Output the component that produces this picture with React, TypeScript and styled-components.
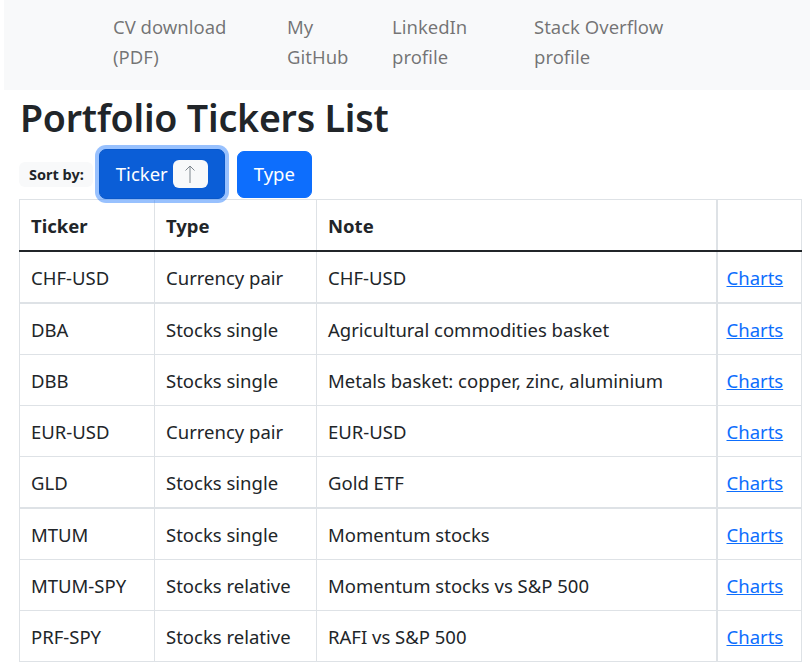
import React from "react";
import styled, { createGlobalStyle } from "styled-components";

const GlobalStyle = createGlobalStyle`
  html, body {
    margin: 0;
    padding: 0;
    background: #ffffff;
  }
  body {
    font-family: "Noto Sans", "Open Sans", sans-serif;
    font-size: 18.5px;
    line-height: 30px;
    color: #212529;
  }
`;

const NavBar = styled.nav`
  margin-left: 4px;
  height: 90px;
  box-sizing: border-box;
  padding: 12px 0 0 109px;
  background: #f8f9fa;
  display: flex;
  align-items: flex-start;
`;

const NavItem = styled.a<{ $w: number; $gap: number }>`
  display: block;
  width: ${(p) => p.$w}px;
  margin-right: ${(p) => p.$gap}px;
  flex: none;
  color: rgba(0, 0, 0, 0.55);
  text-decoration: none;
  line-height: 30px;
`;

const Main = styled.main`
  padding: 0 9px 0 19px;
`;

const Title = styled.h1`
  margin: 4px 0 7px 1px;
  font-size: 37.5px;
  line-height: 48px;
  font-weight: 600;
  letter-spacing: -0.2px;
`;

const SortRow = styled.div`
  display: flex;
  align-items: center;
  height: 50px;
`;

const SortBadge = styled.span`
  display: inline-flex;
  align-items: center;
  height: 25px;
  padding: 0 9px 0 10px;
  border-radius: 6px;
  background: #f8f9fa;
  color: #212529;
  font-size: 14.5px;
  font-weight: 700;
  line-height: 1;
  margin-right: 6px;
`;

const SortButton = styled.button<{ $active?: boolean }>`
  position: relative;
  z-index: 1;
  display: inline-flex;
  align-items: center;
  gap: 5px;
  height: ${(p) => (p.$active ? 50 : 47)}px;
  padding: 0 16px;
  margin-right: 12px;
  border: 1px solid ${(p) => (p.$active ? "#0a58ca" : "#0d6efd")};
  border-radius: 7px;
  background: ${(p) => (p.$active ? "#0b5ed7" : "#0d6efd")};
  color: #ffffff;
  font-family: inherit;
  font-size: 18.5px;
  line-height: 30px;
  box-shadow: ${(p) => (p.$active ? "0 0 0 4px rgba(49, 132, 253, 0.5)" : "none")};
  cursor: pointer;
`;

const ArrowBadge = styled.span`
  display: inline-flex;
  align-items: center;
  justify-content: center;
  width: 35px;
  height: 28px;
  border-radius: 6px;
  background: #f8f9fa;
`;

const Table = styled.table`
  width: 782px;
  border-collapse: collapse;
  table-layout: fixed;
  border: 1px solid #dee2e6;
`;

const HeadCell = styled.th<{ $w: number; $thick?: boolean }>`
  box-sizing: border-box;
  width: ${(p) => p.$w}px;
  text-align: left;
  font-weight: 700;
  padding: 11px 11px 9px;
  line-height: 30px;
  border: 1px solid #dee2e6;
  border-left-width: ${(p) => (p.$thick ? 2 : 1)}px;
  border-bottom: 2px solid #212529;
`;

const Cell = styled.td<{ $thick?: boolean; $divider?: boolean }>`
  padding: 11px 11px 9px ${(p) => (p.$thick ? 9 : 11)}px;
  line-height: 30px;
  border: 1px solid #dee2e6;
  border-left-width: ${(p) => (p.$thick ? 2 : 1)}px;
  border-top-width: ${(p) => (p.$divider ? 2 : 1)}px;
  white-space: nowrap;
`;

const ChartLink = styled.a`
  color: #0d6efd;
  text-decoration: underline;
`;

const navLinks = [
  { label: "CV download (PDF)", w: 125, gap: 49 },
  { label: "My GitHub", w: 70, gap: 35 },
  { label: "LinkedIn profile", w: 80, gap: 62 },
  { label: "Stack Overflow profile", w: 140, gap: 0 },
];

const rows = [
  { ticker: "CHF-USD", type: "Currency pair", note: "CHF-USD" },
  { ticker: "DBA", type: "Stocks single", note: "Agricultural commodities basket", divider: true },
  { ticker: "DBB", type: "Stocks single", note: "Metals basket: copper, zinc, aluminium" },
  { ticker: "EUR-USD", type: "Currency pair", note: "EUR-USD" },
  { ticker: "GLD", type: "Stocks single", note: "Gold ETF" },
  { ticker: "MTUM", type: "Stocks single", note: "Momentum stocks", divider: true },
  { ticker: "MTUM-SPY", type: "Stocks relative", note: "Momentum stocks vs S&P 500" },
  { ticker: "PRF-SPY", type: "Stocks relative", note: "RAFI vs S&P 500" },
];

function UpArrow() {
  return (
    <svg width="14" height="20" viewBox="0 0 14 20" fill="none" stroke="#7d858c" strokeWidth="1">
      <path d="M7 2V19" />
      <path d="M2.5 6.5L7 2L11.5 6.5" />
    </svg>
  );
}

export default function App() {
  return (
    <>
      <GlobalStyle />
      <NavBar>
        {navLinks.map((l) => (
          <NavItem key={l.label} href="#" $w={l.w} $gap={l.gap}>
            {l.label}
          </NavItem>
        ))}
      </NavBar>
      <Main>
        <Title>Portfolio Tickers List</Title>
        <SortRow>
          <SortBadge>Sort by:</SortBadge>
          <SortButton $active>
            Ticker
            <ArrowBadge>
              <UpArrow />
            </ArrowBadge>
          </SortButton>
          <SortButton>Type</SortButton>
        </SortRow>
        <Table>
          <thead>
            <tr>
              <HeadCell $w={135}>Ticker</HeadCell>
              <HeadCell $w={162}>Type</HeadCell>
              <HeadCell $w={400}>Note</HeadCell>
              <HeadCell $w={85} $thick></HeadCell>
            </tr>
          </thead>
          <tbody>
            {rows.map((r) => (
              <tr key={r.ticker}>
                <Cell $divider={r.divider}>{r.ticker}</Cell>
                <Cell $divider={r.divider}>{r.type}</Cell>
                <Cell $divider={r.divider}>{r.note}</Cell>
                <Cell $divider={r.divider} $thick>
                  <ChartLink href="#">Charts</ChartLink>
                </Cell>
              </tr>
            ))}
          </tbody>
        </Table>
      </Main>
    </>
  );
}
